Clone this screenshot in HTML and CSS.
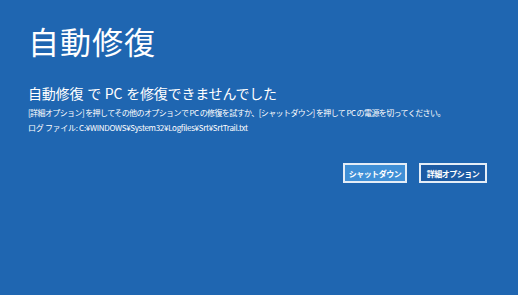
FILE: index.html
```html
<!DOCTYPE html>
<html lang="ja">

<head>
  <meta charset="UTF-8">
  <meta name="viewport" content="width=device-width, initial-scale=1.0">
  <title>自動修復</title>
  <link rel="stylesheet" href="styles.css">
</head>

<body>
  <div class="screen">
    <h1 class="title">自動修復</h1>
    <h2 class="message">自動修復 で PC を修復できませんでした</h2>
    <p class="detail">[詳細オプション] を押してその他のオプションで PC の修復を試すか、[シャットダウン] を押して PC の電源を切ってください。</p>
    <p class="detail log">ログ ファイル: C:¥WINDOWS¥System32¥Logfiles¥Srt¥SrtTrail.txt</p>
    <div class="actions">
      <button class="btn btn-primary">シャットダウン</button>
      <button class="btn">詳細オプション</button>
    </div>
  </div>
</body>

</html>
```

FILE: styles.css
```css
* {
  margin: 0;
  padding: 0;
  box-sizing: border-box;
}

body {
  width: 518px;
  height: 295px;
  overflow: hidden;
  background-color: #1f66b1;
  color: #fff;
  font-family: "Noto Sans CJK JP", "Noto Sans", sans-serif;
}

.screen {
  padding: 21px 31px 0 28px;
}

.title {
  font-size: 31px;
  font-weight: 400;
  line-height: 40px;
  letter-spacing: 1px;
}

.message {
  margin-top: 22px;
  font-size: 14px;
  font-weight: 400;
  line-height: 20px;
  letter-spacing: -0.2px;
  word-spacing: 1px;
}

.detail {
  margin-top: 4px;
  font-size: 8px;
  line-height: 12px;
  letter-spacing: -0.6px;
  white-space: nowrap;
}

.log {
  margin-top: 3px;
  letter-spacing: -0.3px;
}

.actions {
  display: flex;
  justify-content: flex-end;
  gap: 12px;
  margin-top: 29px;
}

.btn {
  width: 68px;
  height: 20px;
  border: 2px solid #e4edf7;
  background-color: #1c5ba4;
  color: #fff;
  font-family: "Noto Sans CJK JP", sans-serif;
  font-size: 8px;
  font-weight: 700;
  letter-spacing: -0.5px;
}

.btn-primary {
  width: 64px;
  background-color: #3f8fd6;
}
```
